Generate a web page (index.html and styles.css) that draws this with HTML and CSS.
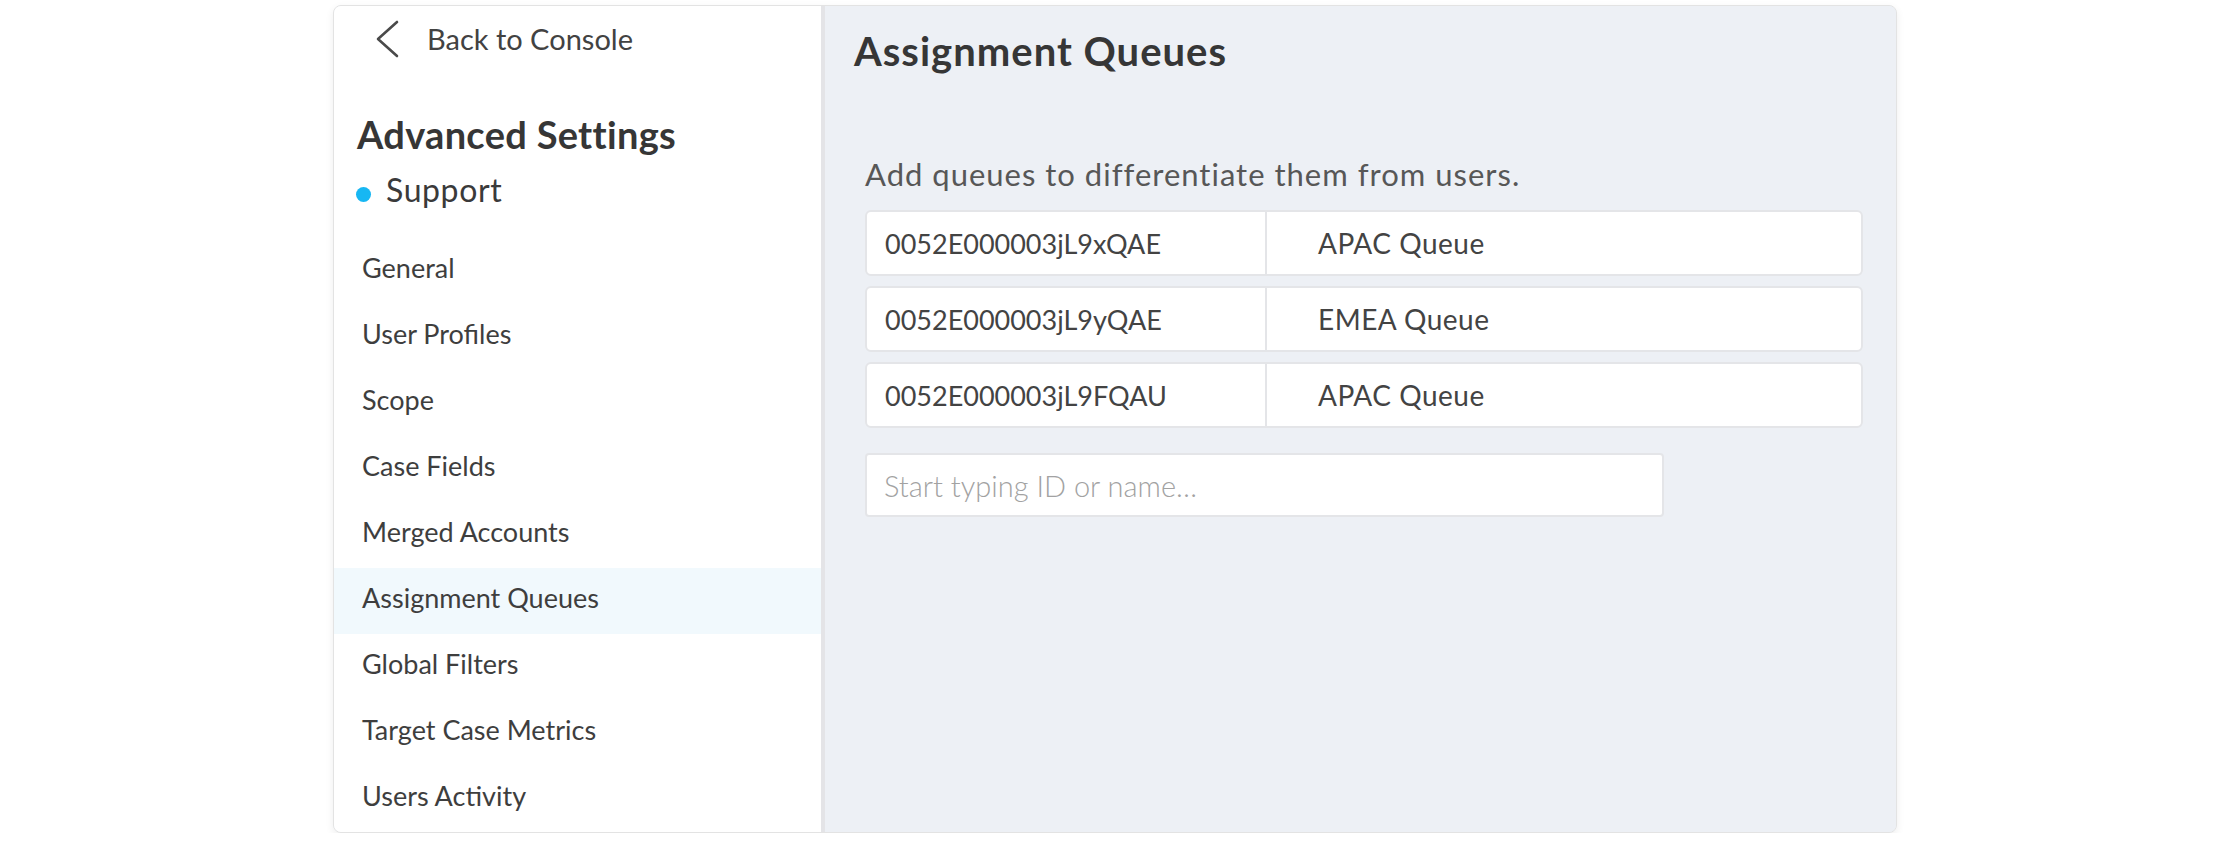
FILE: index.html
```html
<!DOCTYPE html>
<html lang="en">
<head>
<meta charset="utf-8">
<title>Assignment Queues</title>
<link rel="stylesheet" href="styles.css">
</head>
<body>
<div class="card">
  <aside class="sidebar">
    <div class="back">
      <svg class="chev" width="24" height="38" viewBox="0 0 24 38"><polyline points="22,2 3,19 22,36" fill="none" stroke="#4a4a4a" stroke-width="2.6" stroke-linecap="round" stroke-linejoin="round"/></svg>
      <span class="back-text">Back to Console</span>
    </div>
    <h1 class="side-title">Advanced Settings</h1>
    <div class="support"><span class="dot"></span><span>Support</span></div>
    <nav class="menu">
      <div class="item">General</div>
      <div class="item">User Profiles</div>
      <div class="item">Scope</div>
      <div class="item">Case Fields</div>
      <div class="item">Merged Accounts</div>
      <div class="item active">Assignment Queues</div>
      <div class="item">Global Filters</div>
      <div class="item">Target Case Metrics</div>
      <div class="item">Users Activity</div>
    </nav>
  </aside>
  <main class="main">
    <h2 class="title">Assignment Queues</h2>
    <section class="content">
      <p class="desc">Add queues to differentiate them from users.</p>
      <div class="row"><div class="cell-id">0052E000003jL9xQAE</div><div class="cell-name">APAC Queue</div></div>
      <div class="row"><div class="cell-id">0052E000003jL9yQAE</div><div class="cell-name">EMEA Queue</div></div>
      <div class="row"><div class="cell-id">0052E000003jL9FQAU</div><div class="cell-name">APAC Queue</div></div>
      <div class="search">Start typing ID or name…</div>
    </section>
  </main>
</div>
</body>
</html>
```

FILE: styles.css
```css
* { box-sizing: border-box; }
html, body { margin: 0; padding: 0; background: #ffffff; }
body { font-family: Lato, "Noto Sans", sans-serif; color: #404040; padding-right: 2px; }

.card {
  width: 1564px;
  height: 828px;
  margin: 5px auto 0;
  display: flex;
  border: 1px solid #e3e3e3;
  border-radius: 8px;
  box-shadow: 0 3px 8px rgba(0, 0, 0, 0.07);
  overflow: hidden;
  background: #edf0f5;
}

.sidebar {
  width: 491px;
  flex: 0 0 491px;
  padding-top: 2px;
  background: #ffffff;
  border-right: 4px solid #e4e4e7;
  display: flex;
  flex-direction: column;
}

.back {
  height: 66px;
  display: flex;
  align-items: center;
  padding-left: 41px;
  gap: 28px;
}
.chev { display: block; }
.back-text { font-size: 29px; color: #424242; }

.side-title {
  margin: 43px 0 0 23px;
  font-size: 38px;
  font-weight: 700;
  letter-spacing: 0.3px;
  line-height: 44px;
  color: #363636;
}

.support {
  margin: 16px 0 0 22px;
  display: flex;
  align-items: flex-start;
  gap: 15px;
  font-size: 32px;
  letter-spacing: 0.6px;
  line-height: 36px;
  color: #3a3a3a;
}
.dot {
  width: 15px;
  height: 15px;
  margin-top: 15px;
  border-radius: 50%;
  background: #17b7f3;
}

.menu { margin-top: 30px; display: flex; flex-direction: column; }
.item {
  height: 66px;
  flex: 0 0 66px;
  line-height: 60px;
  padding-left: 28px;
  font-size: 27px;
  color: #3e3e3e;
}
.item.active { background: #f1f9fd; }

.main {
  flex: 1;
  padding: 22px 0 0 29px;
  background: #edf0f5;
}
.title {
  margin: 0;
  font-size: 40px;
  font-weight: 700;
  letter-spacing: 1px;
  line-height: 46px;
  color: #363636;
}
.content { padding-left: 11px; }
.desc {
  margin: 82px 0 18px;
  font-size: 31px;
  letter-spacing: 1px;
  line-height: 36px;
  color: #575757;
}

.row {
  width: 998px;
  height: 66px;
  margin-bottom: 10px;
  display: flex;
  background: #ffffff;
  border: 2px solid #e4e5e8;
  border-radius: 6px;
  font-size: 27px;
  color: #434343;
}
.cell-id {
  width: 400px;
  flex: 0 0 400px;
  padding-left: 18px;
  border-right: 2px solid #e4e5e8;
  display: flex;
  align-items: center;
}
.cell-name {
  flex: 1;
  padding-left: 51px;
  display: flex;
  align-items: center;
  font-size: 28px;
  letter-spacing: 0.5px;
}

.search {
  width: 799px;
  height: 64px;
  margin-top: 25px;
  padding-left: 17px;
  display: flex;
  align-items: center;
  background: #ffffff;
  border: 2px solid #e4e5e8;
  border-radius: 4px;
  font-size: 29px;
  font-weight: 300;
  color: #a2a2a2;
}
```
